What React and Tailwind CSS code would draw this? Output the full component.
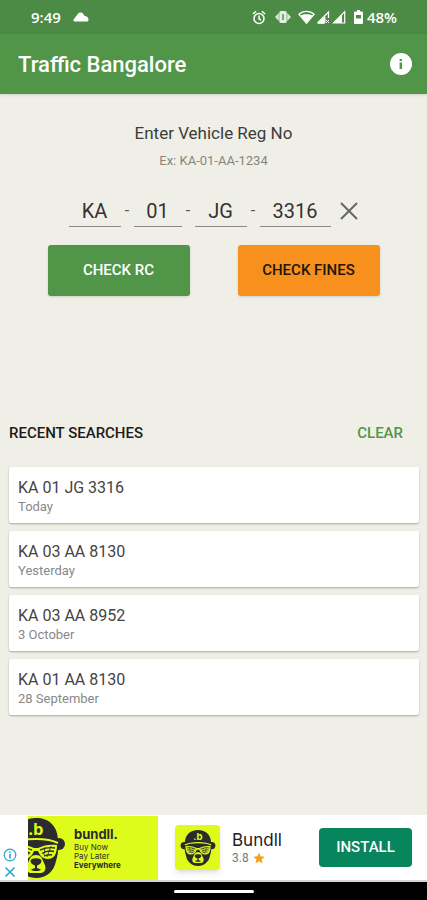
import React, { useState } from 'react';

const PLATE_FIELDS = [
  { id: 'state', label: 'State code', width: 'w-13', max: 2 },
  { id: 'district', label: 'District number', width: 'w-12', max: 2 },
  { id: 'series', label: 'Series', width: 'w-13', max: 2 },
  { id: 'number', label: 'Vehicle number', width: 'w-[71px]', max: 4 },
];

const INITIAL_SEARCHES = [
  { plate: 'KA 01 JG 3316', date: 'Today' },
  { plate: 'KA 03 AA 8130', date: 'Yesterday' },
  { plate: 'KA 03 AA 8952', date: '3 October' },
  { plate: 'KA 01 AA 8130', date: '28 September' },
];

const StatusBar = () => (
  <div className="flex h-[34px] items-center justify-between bg-[#4b8b45] pl-[31px] pr-[30px] text-white">
    <div className="flex items-center gap-3">
      <span className="font-['Open_Sans',sans-serif] text-[15px] font-semibold">9:49</span>
      <svg viewBox="0 0 16 10" className="h-[10px] w-4" fill="currentColor">
        <path d="M1.500 9.500C.3 9.500.2 8 1 7L4.800 2C6.200.2 8.800.2 10.200 1.800L11.600 4C13.800 4.200 15.500 5.500 15.500 7.500 15.500 9 15 9.500 14 9.500Z" />
      </svg>
    </div>
    <div className="flex items-center">
      {/* alarm */}
      <svg viewBox="0 0 14 15" className="h-[15px] w-[14px]" fill="none" stroke="currentColor" strokeWidth="1.500">
        <circle cx="7" cy="8.500" r="5" />
        <path d="M1 4 4 1.200M13 4 10 1.200M7 5.500v3.300l2 1.200" />
      </svg>
      {/* vibrate */}
      <svg viewBox="0 0 16 14" className="ml-[9px] h-[14px] w-4" fill="currentColor">
        <path d="M0 7 3.800 3v8ZM16 7l-3.800-4v8Z" opacity="0.800" />
        <path fillRule="evenodd" d="M5.800 1h4.400a1.500 1.500 0 0 1 1.500 1.500v9a1.500 1.500 0 0 1-1.500 1.500H5.800a1.500 1.500 0 0 1-1.500-1.500v-9A1.500 1.500 0 0 1 5.800 1Zm1.500 3v6h1.400V4Z" opacity="0.850" />
      </svg>
      {/* wifi */}
      <svg viewBox="0 0 17 14" className="ml-[7px] h-[14px] w-[17px]">
        <path d="M.9 4.200C5 .4 12 .4 16.100 4.200L8.500 13.300Z" fill="none" stroke="currentColor" strokeWidth="1.200" />
        <path d="M2.500 5.500c3-1.800 9-1.800 12 0L8.500 13Z" fill="currentColor" />
      </svg>
      {/* signal, sim 1 and sim 2 */}
      <svg viewBox="0 0 14 14" className="ml-px h-[14px] w-[14px]">
        <path d="M1.500 13H8M1.500 13 12.500 2v6" fill="none" stroke="currentColor" strokeWidth="1.300" />
        <path d="M3 13 9 7v6ZM10 10l3 3M13 10l-3 3" fill="currentColor" stroke="currentColor" strokeWidth="1" />
      </svg>
      <svg viewBox="0 0 14 14" className="ml-[2px] h-[14px] w-[14px]">
        <path d="M1.500 13 12.700 1.700V13Z" fill="none" stroke="currentColor" strokeWidth="1.200" />
        <path d="M1.500 13 10 4.500V13Z" fill="currentColor" />
      </svg>
      {/* battery */}
      <svg viewBox="0 0 9 14" className="ml-2 mr-[4px] h-[14px] w-[9px]" fill="currentColor">
        <path fillRule="evenodd" d="M3 0h3v1.500h2a1 1 0 0 1 1 1V13a1 1 0 0 1-1 1H1a1 1 0 0 1-1-1V2.500a1 1 0 0 1 1-1h2ZM2 5v3.500h5V5Z" />
      </svg>
      <span className="font-['Open_Sans',sans-serif] text-[15px] font-semibold">48%</span>
    </div>
  </div>
);

const AppBar = () => (
  <header className="flex h-15 items-center justify-between bg-[#519549] pl-[18px] pr-[14px] text-white shadow-sm">
    <h1 className="text-[22px] font-medium">Traffic Bangalore</h1>
    <button type="button" aria-label="About">
      <svg viewBox="0 0 24 24" className="size-6">
        <circle cx="12" cy="12" r="11" fill="#fff" />
        <path d="M10.600 7h2.400v2h-2.400ZM10.600 10.500h2.400V17h-2.400Z" fill="#519549" />
      </svg>
    </button>
  </header>
);

const BearLogo = ({ className }) => (
  <svg viewBox="0 0 60 62" className={className}>
    <g fill="#2b2b2e">
      <circle cx="7" cy="27" r="6" />
      <circle cx="53" cy="27" r="6" />
      <path d="M8 24C8 9 17 1 30 1s22 8 22 23c1 7 0 14-2 20-2 10-9 17-20 17S12 54 10 44C8 38 7 31 8 24Z" />
    </g>
    <text x="22" y="18" fill="#dffb1c" fontSize="16" fontWeight="700" fontFamily="Inter, sans-serif">.b</text>
    {/* cap brim */}
    <path d="M8 26C18 20.500 42 20.500 52 26" fill="none" stroke="#dffb1c" strokeWidth="2" />
    {/* shutter glasses */}
    <path d="M9 28c7-1 13 0 19 3h4c6-3 12-4 19-3 0 9-3 14-9 14-5 0-8-3-10-8h-4c-2 5-5 8-10 8-6 0-9-5-9-14Z" fill="#dffb1c" />
    <g fill="none" stroke="#2b2b2e" strokeWidth="1.400">
      <path d="M11 31c5-1 10 0 15 2M12 34.500c4-1 9 0 12 2M14 38c3-1 5 0 8 1M49 31c-5-1-10 0-15 2M48 34.500c-4-1-9 0-12 2M46 38c-3-1-5 0-8 1" />
      <path d="m15 29 4 11M21 30l1 8M45 29l-4 11M39 30l-1 8" strokeWidth="0.800" />
    </g>
    {/* muzzle, nose and mouth */}
    <path d="M30 38c5 0 6 3 8 8 3 5 1 10-3 10H25c-4 0-6-5-3-10 2-5 3-8 8-8Z" fill="#dffb1c" />
    <path d="M24.500 43.500c1-3 10-3 11 0 0 3-2 4-4.500 5v2.500l4 1.500c-2 2-8 2-10 0l4-1.500v-2.500c-2.500-1-4.500-2-4.500-5Z" fill="#2b2b2e" />
  </svg>
);

const AdBanner = () => (
  <aside className="flex h-[67px] items-center border-b-2 border-[#d5d5d5] bg-white">
    <div className="flex w-7 flex-col items-center gap-1 self-end pb-[2px] pr-2 text-[#25a5cf]">
      <button type="button" aria-label="Ad info">
        <svg viewBox="0 0 14 14" className="size-[14px]" fill="none" stroke="currentColor" strokeWidth="1.200">
          <circle cx="7" cy="7" r="5.800" />
          <path d="M7 6v4.500M7 3.200v1.500" strokeWidth="1.600" />
        </svg>
      </button>
      <button type="button" aria-label="Close ad">
        <svg viewBox="0 0 12 12" className="size-3" fill="none" stroke="currentColor" strokeWidth="1.600">
          <path d="m1.500 1.500 9 9M10.500 1.500l-9 9" />
        </svg>
      </button>
    </div>
    <a href="#bundll" className="flex h-16 w-[130px] shrink-0 items-center overflow-hidden bg-[#dffb1c] text-[#2b2b2e]">
      <span className="flex w-[38px] shrink-0 justify-end overflow-hidden">
        <BearLogo className="h-[62px] w-[60px] shrink-0" />
      </span>
      <span className="ml-2 flex flex-col font-[Inter,sans-serif] text-[8px] leading-[9px]">
        <span className="text-[13px] font-bold leading-[17px]">bundll.</span>
        <span>Buy Now</span>
        <span>Pay Later</span>
        <span className="font-bold">Everywhere</span>
      </span>
    </a>
    <span className="ml-[17px] flex size-[45px] shrink-0 items-center justify-center rounded-sm bg-[#dffb1c] shadow-md">
      <BearLogo className="h-[38px] w-9" />
    </span>
    <div className="ml-3 flex flex-1 flex-col">
      <span className="font-[Inter,sans-serif] text-[17px] leading-5 text-[#222]">Bundll</span>
      <span className="flex items-center gap-1 text-[12px] leading-4 text-[#777]">
        3.8
        <svg viewBox="0 0 12 12" className="size-3" fill="#f5a21b">
          <path d="m6 .5 1.600 3.800 4.100.4-3.100 2.700.9 4.100L6 9.300l-3.500 2.200.9-4.100L.3 4.700l4.100-.4Z" />
        </svg>
      </span>
    </div>
    <button type="button" className="mr-[15px] h-[39px] w-[93px] rounded-sm bg-[#07855c] text-[15px] font-medium text-white">
      INSTALL
    </button>
  </aside>
);

const App = () => {
  const [plate, setPlate] = useState({ state: 'KA', district: '01', series: 'JG', number: '3316' });
  const [searches, setSearches] = useState(INITIAL_SEARCHES);

  const clearPlate = () => setPlate({ state: '', district: '', series: '', number: '' });

  return (
    <div className="flex min-h-screen flex-col bg-[#f0efe7] font-[Roboto,sans-serif]">
      <StatusBar />
      <AppBar />

      <main className="flex-1 px-2">
        <form className="flex flex-col items-center pt-[27px]" onSubmit={e => e.preventDefault()}>
          <h2 className="text-[17px] leading-6 text-[#3d3d3a]">Enter Vehicle Reg No</h2>
          <p className="mt-1 text-[13px] leading-6 text-[#85857f]">Ex: KA-01-AA-1234</p>

          <div className="mt-[22px] flex items-center">
            {PLATE_FIELDS.map((field, i) => (
              <React.Fragment key={field.id}>
                {i > 0 && <span className="w-[13px] text-center text-[16px] leading-5 text-[#555]">-</span>}
                <input
                  aria-label={field.label}
                  className={`${field.width} h-8 border-b border-[#8a8a84] bg-transparent text-center text-[20px] text-[#333] outline-none`}
                  maxLength={field.max}
                  value={plate[field.id]}
                  onChange={e => setPlate({ ...plate, [field.id]: e.target.value })}
                />
              </React.Fragment>
            ))}
            <button type="button" aria-label="Clear number" className="ml-2" onClick={clearPlate}>
              <svg viewBox="0 0 20 20" className="size-5" fill="none" stroke="#666" strokeWidth="2">
                <path d="m2 2 16 16M18 2 2 18" />
              </svg>
            </button>
          </div>

          <div className="mt-[18px] flex gap-12">
            <button type="submit" className="h-[51px] w-[142px] rounded-[3px] bg-[#519549] text-[15px] font-medium text-white shadow-sm">
              CHECK RC
            </button>
            <button type="submit" className="h-[51px] w-[142px] rounded-[3px] bg-[#f8901e] text-[15px] font-medium text-[#1d1608] shadow-sm">
              CHECK FINES
            </button>
          </div>
        </form>

        <section className="mt-[125px]">
          <div className="flex items-center justify-between pl-px pr-4 text-[15px] leading-6 font-medium">
            <h2 className="text-[#1c1c1a]">RECENT SEARCHES</h2>
            <button type="button" className="text-[#519549]" onClick={() => setSearches([])}>
              CLEAR
            </button>
          </div>
          <ul className="mt-[22px] flex flex-col gap-2 pl-px">
            {searches.map(item => (
              <li key={item.plate} className="rounded-[2px] bg-white px-[9px] pt-[10px] pb-2 shadow-[0_1px_2px_rgba(0,0,0,0.3)]">
                <p className="text-[16px] leading-[21px] text-[#444]">{item.plate}</p>
                <p className="text-[13px] leading-[17px] text-[#888]">{item.date}</p>
              </li>
            ))}
          </ul>
        </section>
      </main>

      <AdBanner />
      <div className="flex h-[18px] items-center justify-center bg-black">
        <div className="h-[3px] w-20 rounded-full bg-white" />
      </div>
    </div>
  );
};

export default App;
